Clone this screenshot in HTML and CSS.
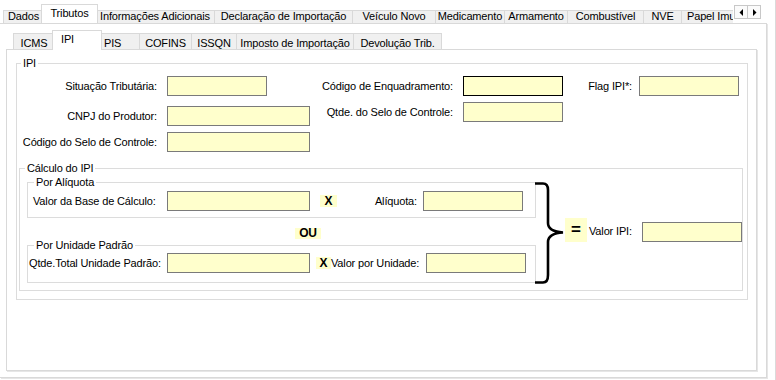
FILE: index.html
```html
<!DOCTYPE html>
<html lang="pt-BR">
<head>
  <meta charset="UTF-8">
  <title>Tributos - IPI</title>
  <link rel="stylesheet" href="styles.css">
</head>
<body>

  <div class="janela">

    <div class="abas abas-principal">
      <span class="aba">Dados</span>
      <span class="aba ativa">Tributos</span>
      <span class="aba">Informações Adicionais</span>
      <span class="aba">Declaração de Importação</span>
      <span class="aba">Veículo Novo</span>
      <span class="aba">Medicamento</span>
      <span class="aba">Armamento</span>
      <span class="aba">Combustível</span>
      <span class="aba">NVE</span>
      <span class="aba">Papel Imune</span>
    </div>
    <div class="setas">
      <span class="seta"><svg width="5" height="7" viewBox="0 0 5 7"><polygon points="4,0 4,7 0.5,3.5" fill="#000"/></svg></span>
      <span class="seta"><svg width="5" height="7" viewBox="0 0 5 7"><polygon points="1,0 1,7 4.5,3.5" fill="#000"/></svg></span>
    </div>

    <div class="painel painel-principal">

      <div class="abas abas-internas">
        <span class="aba">ICMS</span>
        <span class="aba ativa curta">IPI</span>
        <span class="aba curta">PIS</span>
        <span class="aba">COFINS</span>
        <span class="aba">ISSQN</span>
        <span class="aba">Imposto de Importação</span>
        <span class="aba">Devolução Trib.</span>
      </div>

      <div class="painel painel-interno">
        <fieldset class="grupo grupo-ipi">
          <legend>IPI</legend>

          <div class="colunas">
            <div class="coluna col-esq">
              <div class="linha"><label>Situação Tributária:</label><input class="campo"></div>
              <div class="linha linha-2"><label>CNPJ do Produtor:</label><input class="campo largo"></div>
              <div class="linha linha-3"><label>Código do Selo de Controle:</label><input class="campo largo"></div>
            </div>
            <div class="coluna col-meio">
              <div class="linha"><label>Código de Enquadramento:</label><input class="campo focado"></div>
              <div class="linha linha-b"><label>Qtde. do Selo de Controle:</label><input class="campo"></div>
            </div>
            <div class="coluna col-dir">
              <div class="linha"><label>Flag IPI*:</label><input class="campo"></div>
            </div>
          </div>

          <fieldset class="grupo grupo-calculo">
            <legend>Cálculo do IPI</legend>
            <div class="calculo">
              <div class="calculo-opcoes">
                <fieldset class="grupo sub grupo-aliquota">
                  <legend>Por Alíquota</legend>
                  <div class="linha">
                    <label class="rot-base">Valor da Base de Cálculo:</label>
                    <input class="campo largo">
                    <span class="sinal vezes">X</span>
                    <label class="rot-aliquota">Alíquota:</label>
                    <input class="campo">
                  </div>
                </fieldset>
                <div class="ou"><span class="sinal">OU</span></div>
                <fieldset class="grupo sub grupo-unidade">
                  <legend>Por Unidade Padrão</legend>
                  <div class="linha">
                    <label class="rot-qtde">Qtde.Total Unidade Padrão:</label>
                    <input class="campo largo">
                    <span class="sinal vezes-2">X</span>
                    <label class="rot-unidade">Valor por Unidade:</label>
                    <input class="campo">
                  </div>
                </fieldset>
              </div>

              <svg class="chave" width="29" height="102" viewBox="0 0 29 102">
                <path d="M0 1.5 H8 Q13 1.5 13 8 V41 Q13 49.5 28 50.5 Q13 51.5 13 60 V93 Q13 100.5 8 100.5 H0" fill="none" stroke="#000" stroke-width="2.6"/>
              </svg>
              <span class="sinal igual">=</span>
              <label class="rot-valor">Valor IPI:</label>
              <input class="campo valor-ipi">
            </div>
          </fieldset>
        </fieldset>
      </div>

    </div>

  </div>

</body>
</html>
```

FILE: styles.css
```css
* {
  box-sizing: border-box;
}

body {
  margin: 0;
  background-color: #fff;
  font-family: 'Liberation Sans', Arial, sans-serif;
  font-size: 11px;
  letter-spacing: -0.15px;
  color: #000;
}

.janela {
  position: relative;
  width: 776px;
  height: 380px;
  overflow: hidden;
  border-right: 1px solid #dadada;
}

/* abas */

.abas {
  display: flex;
  align-items: flex-end;
}

.aba {
  flex: none;
  border: 1px solid #d9d9d9;
  border-bottom: 0;
  background-color: #f0f0f0;
  margin-left: -1px;
  text-align: center;
  white-space: nowrap;
  overflow: hidden;
  line-height: 13px;
}

.aba:first-child {
  margin-left: 0;
}

.aba.ativa {
  position: relative;
  z-index: 1;
  background-color: #fff;
  margin-left: -3px;
  margin-right: -2px;
  margin-bottom: -1px;
}

.abas-principal {
  height: 23px;
  width: 733px;
  padding-left: 3px;
  overflow: hidden;
}

.abas-principal .aba {
  height: 13px;
  line-height: 11px;
}

.abas-principal .aba.ativa {
  height: 20px;
  line-height: 13px;
  padding-top: 2px;
}

.abas-principal .aba:nth-child(1) { width: 41px; }
.abas-principal .aba:nth-child(2) { width: 57px; }
.abas-principal .aba:nth-child(3) { width: 120px; }
.abas-principal .aba:nth-child(4) { width: 139px; }
.abas-principal .aba:nth-child(5) { width: 84px; }
.abas-principal .aba:nth-child(6) { width: 70px; }
.abas-principal .aba:nth-child(7) { width: 64px; }
.abas-principal .aba:nth-child(8) { width: 77px; }
.abas-principal .aba:nth-child(9) { width: 39px; }
.abas-principal .aba:nth-child(10) { width: 80px; text-align: left; padding-left: 5px; }

.setas {
  position: absolute;
  top: 5px;
  left: 735px;
  display: flex;
}

.seta {
  width: 14px;
  height: 14px;
  border: 1px solid #c8c8c8;
  background-color: #fbfbfb;
  margin-left: -1px;
  display: flex;
  align-items: center;
  justify-content: center;
}

.abas-internas {
  height: 25px;
  padding-left: 7px;
}

.abas-internas .aba {
  height: 16px;
  padding-top: 3px;
}

.abas-internas .aba.ativa {
  height: 20px;
  padding-top: 2px;
}

.abas-internas .aba.curta {
  text-align: left;
  padding-left: 4px;
}

.abas-internas .aba.ativa.curta {
  padding-left: 8px;
}

.abas-internas .aba:nth-child(1) { width: 42px; }
.abas-internas .aba:nth-child(2) { width: 50px; }
.abas-internas .aba:nth-child(3) { width: 41px; }
.abas-internas .aba:nth-child(4) { width: 53px; }
.abas-internas .aba:nth-child(5) { width: 46px; }
.abas-internas .aba:nth-child(6) { width: 118px; }
.abas-internas .aba:nth-child(7) { width: 89px; }

/* paineis */

.painel {
  background-color: #fff;
  border: 1px solid #d9d9d9;
  box-shadow: 1px 1px 0 #e6e6e6;
}

.painel-principal {
  border-left: 0;
  width: 767px;
  height: 355px;
  padding-left: 6px;
}

.painel-interno {
  width: 751px;
  height: 322px;
  padding-top: 7px;
  padding-left: 9px;
}

/* grupos */

.grupo {
  margin: 0;
  padding: 0;
  border: 1px solid #dcdcdc;
  min-width: 0;
}

.grupo legend {
  padding: 0 2px;
  margin-left: 4px;
  line-height: 13px;
}

.grupo-ipi {
  width: 732px;
  padding-bottom: 8px;
}

.colunas {
  display: flex;
  margin-top: 6px;
}

.linha {
  display: flex;
  align-items: center;
  height: 20px;
}

.linha label {
  flex: none;
}

.coluna label {
  text-align: right;
}

.col-esq label {
  width: 140px;
  margin-right: 10px;
}

.col-esq .linha-2 {
  margin-top: 10px;
}

.col-esq .linha-3 {
  margin-top: 6px;
}

.col-meio label {
  width: 143px;
  margin-right: 10px;
}

.col-meio .linha-b {
  margin-top: 6px;
}

.col-dir label {
  width: 69px;
  margin-right: 7px;
}

.campo {
  flex: none;
  width: 100px;
  height: 20px;
  margin: 0;
  padding: 0;
  border: 1px solid #7a7a7a;
  background-color: #ffffcc;
  font: inherit;
}

.campo.largo {
  width: 143px;
}

.campo.focado {
  border-color: #000;
}

/* calculo */

.grupo-calculo {
  width: 724px;
  margin-top: 10px;
  margin-left: 2px;
  padding-bottom: 6px;
}

.grupo-calculo legend {
  margin-left: 5px;
}

.calculo {
  display: flex;
  align-items: flex-start;
}

.calculo-opcoes {
  width: 509px;
  margin-left: 7px;
}

.sub legend {
  margin-left: 6px;
}

.grupo-aliquota {
  margin-top: 1px;
  padding-bottom: 6px;
}

.grupo-aliquota .linha {
  margin-top: 2px;
  padding-left: 5px;
}

.grupo-unidade {
  padding-bottom: 9px;
}

.grupo-unidade .linha {
  margin-top: 1px;
  padding-left: 1px;
}

.rot-base {
  width: 134px;
}

.rot-qtde {
  width: 138px;
  white-space: nowrap;
}

.sinal {
  background-color: #ffffcc;
  font-weight: bold;
  font-size: 12px;
  line-height: 12px;
  text-align: center;
}

.vezes {
  width: 17px;
  margin-left: 10px;
}

.rot-aliquota {
  width: 80px;
  margin-right: 6px;
  text-align: right;
}

.vezes-2 {
  width: 15px;
  margin-left: 6px;
}

.rot-unidade {
  width: 95px;
  white-space: nowrap;
}

.ou {
  height: 11px;
  margin: 9px 0 1px;
  padding-left: 268px;
}

.ou .sinal {
  display: inline-block;
  width: 26px;
  height: 11px;
  line-height: 11px;
}

.chave {
  flex: none;
  margin-left: -1px;
  margin-top: 7px;
}

.igual {
  flex: none;
  width: 22px;
  height: 24px;
  margin-top: 43px;
  margin-left: 1px;
  font-size: 17px;
  line-height: 23px;
}

.rot-valor {
  flex: none;
  margin-top: 50px;
  margin-left: 2px;
  width: 53px;
}

.valor-ipi {
  margin-top: 47px;
}
```
